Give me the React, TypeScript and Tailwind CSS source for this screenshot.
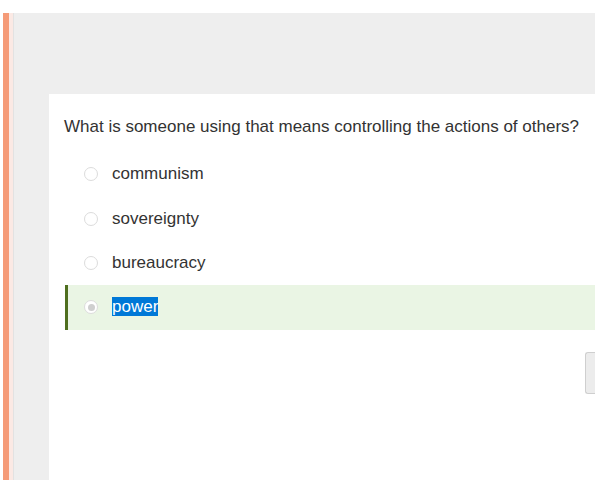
const options = ['communism', 'sovereignty', 'bureaucracy', 'power'];

function Radio({ checked }: { checked: boolean }) {
    return (
        <span className="flex h-[14px] w-[14px] items-center justify-center rounded-full border border-[#dcdcdc] bg-white">
            {checked && <span className="h-[7px] w-[7px] rounded-full bg-[#cfcfcf]" />}
        </span>
    );
}

export default function App() {
    const selected = 'power';

    return (
        <div className="min-h-[480px] bg-white pt-[13px] font-['Liberation_Sans',Arial,sans-serif] text-[#333333]">
            <div className="flex h-[467px] pl-[3px]">
                <div className="w-[6px] bg-[#f59b78]" />
                <div className="w-[4px] bg-[#fbe9e4]" />
                <div className="w-px bg-[#e2e2e2]" />
                <div className="flex flex-1 flex-col bg-[#eeeeee] pl-[35px] pt-[81px]">
                    <div className="flex-1 bg-white pl-[15px] pt-[23px]">
                        <p className="text-[17px] leading-[20px] whitespace-nowrap">
                            What is someone using that means controlling the actions of others?
                        </p>

                        <div className="mt-[15px] flex flex-col pl-px">
                            {options.map((opt) => {
                                const isSel = opt === selected;
                                return (
                                    <div
                                        key={opt}
                                        className={`flex h-[44.4px] items-center border-l-[3px] pl-[16px] ${isSel ? 'border-[#4f6f1f] bg-[#eaf5e4]' : 'border-transparent'}`}
                                    >
                                        <Radio checked={isSel} />
                                        <span className="ml-[14px] text-[17px] leading-[20px]">
                                            {isSel ? <span className="bg-[#0078d7] text-white">{opt}</span> : opt}
                                        </span>
                                    </div>
                                );
                            })}
                        </div>

                        <div className="mt-[22px] flex justify-end">
                            <div className="h-[42px] w-[10px] rounded-l-[3px] border border-r-0 border-[#cfcfcf] bg-[#ececec]" />
                        </div>
                    </div>
                </div>
            </div>
        </div>
    );
}
